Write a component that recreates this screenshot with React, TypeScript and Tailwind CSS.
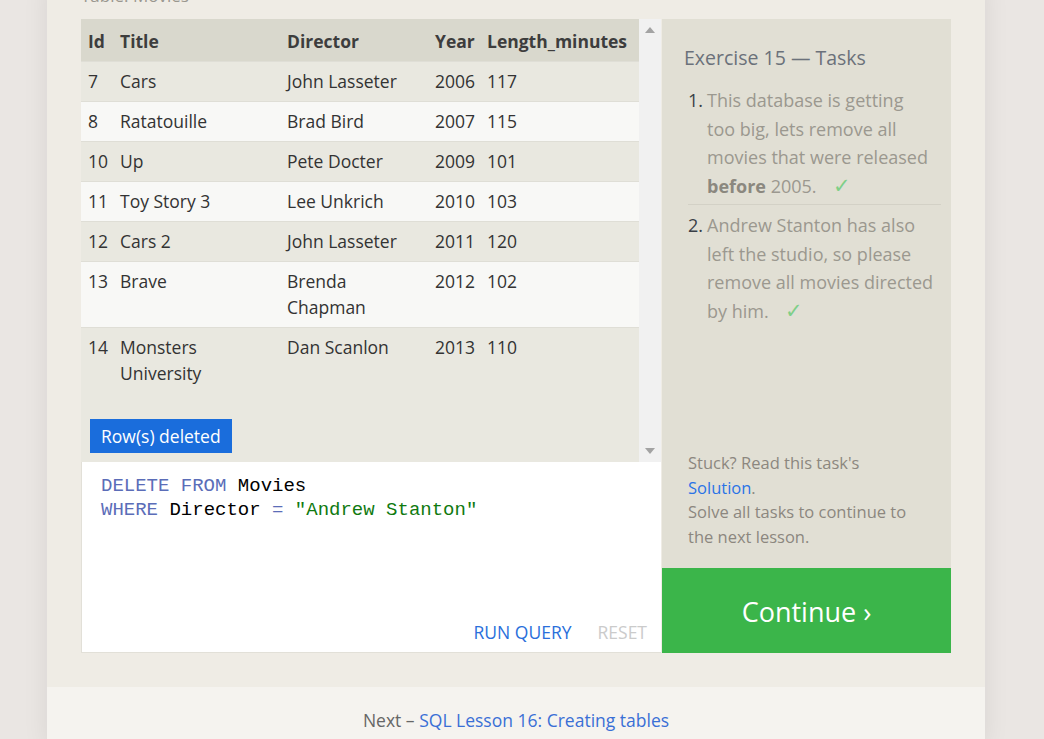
const rows = [
  { id: "7", title: "Cars", director: "John Lasseter", year: "2006", len: "117" },
  { id: "8", title: "Ratatouille", director: "Brad Bird", year: "2007", len: "115" },
  { id: "10", title: "Up", director: "Pete Docter", year: "2009", len: "101" },
  { id: "11", title: "Toy Story 3", director: "Lee Unkrich", year: "2010", len: "103" },
  { id: "12", title: "Cars 2", director: "John Lasseter", year: "2011", len: "120" },
  { id: "13", title: "Brave", director: "Brenda Chapman", year: "2012", len: "102" },
  { id: "14", title: "Monsters University", director: "Dan Scanlon", year: "2013", len: "110" },
];

function Check() {
  return <span className="ml-[16px] text-[21px] leading-none text-[#7fcf88]">✓</span>;
}

export default function App() {
  return (
    <div
      className="h-[739px] overflow-hidden bg-[#eae6e3] text-[#333]"
      style={{ fontFamily: '"Open Sans", "Noto Sans", sans-serif' }}
    >
      <div className="ml-[47px] w-[938px] shadow-[0_0_24px_rgba(0,0,0,0.08)]">
        {/* exercise */}
        <div className="bg-[#efece5] px-[34px] pb-[34px]">
          <div className="-mt-[16px] mb-[11px] text-[17px] leading-[24px] text-[#9a978f]">Table: Movies</div>

          <div className="flex gap-px">
            {/* left: results + editor */}
            <div className="flex w-[580px] flex-col">
              <div className="flex h-[443px] bg-[#e9e8e0]">
                <div className="w-[558px]">
                  <table className="w-full table-fixed border-collapse text-left text-[17.5px]">
                    <colgroup>
                      <col className="w-[32px]" />
                      <col className="w-[167px]" />
                      <col className="w-[148px]" />
                      <col className="w-[52px]" />
                      <col />
                    </colgroup>
                    <thead>
                      <tr className="h-[42px] bg-[#d9d8cd] text-[#3d3d3d]">
                        <th className="pl-[7px] pt-[2px] font-bold">Id</th>
                        <th className="pl-[7px] pt-[2px] font-bold">Title</th>
                        <th className="pl-[7px] pt-[2px] font-bold">Director</th>
                        <th className="pl-[7px] pt-[2px] font-bold">Year</th>
                        <th className="pl-[7px] pt-[2px] font-bold whitespace-nowrap">Length_minutes</th>
                      </tr>
                    </thead>
                    <tbody>
                      {rows.map((r, i) => (
                        <tr
                          key={r.id}
                          className={`border-t border-[#dfded6] align-top leading-[26px] ${
                            i % 2 === 1 ? "bg-[#f8f8f6]" : "bg-[#e9e8e0]"
                          }`}
                        >
                          <td className="pt-[6px] pb-[7px] pl-[7px]">{r.id}</td>
                          <td className="pt-[6px] pb-[7px] pl-[7px] pr-[20px]">{r.title}</td>
                          <td className="pt-[6px] pb-[7px] pl-[7px] pr-[20px]">{r.director}</td>
                          <td className="pt-[6px] pb-[7px] pl-[7px]">{r.year}</td>
                          <td className="pt-[6px] pb-[7px] pl-[7px]">{r.len}</td>
                        </tr>
                      ))}
                    </tbody>
                  </table>
                  <div className="mt-[26px] ml-[9px] inline-block bg-[#1a6ddc] px-[11px] text-[17.5px] leading-[34px] text-white">
                    Row(s) deleted
                  </div>
                </div>
                {/* scrollbar */}
                <div className="flex w-[22px] flex-col items-center justify-between bg-[#f1f1f1] py-[8px]">
                  <svg width="10" height="6" viewBox="0 0 10 6">
                    <path d="M0 6 L5 0 L10 6 Z" fill="#a3a3a3" />
                  </svg>
                  <svg width="10" height="6" viewBox="0 0 10 6">
                    <path d="M0 0 L5 6 L10 0 Z" fill="#a3a3a3" />
                  </svg>
                </div>
              </div>

              <div className="flex h-[191px] flex-col justify-between border-b border-l border-[#e2e0d8] bg-white">
                <pre
                  className="pt-[12px] pl-[19px] text-[19px] leading-[24px]"
                  style={{ fontFamily: '"Liberation Mono", "DejaVu Sans Mono", monospace' }}
                >
                  <span className="text-[#5b6db8]">DELETE FROM</span> <span className="text-black">Movies</span>
                  {"\n"}
                  <span className="text-[#5b6db8]">WHERE</span> <span className="text-black">Director</span>{" "}
                  <span className="text-[#5b6db8]">=</span> <span className="text-[#107a10]">"Andrew Stanton"</span>
                </pre>
                <div className="flex justify-end gap-[26px] pr-[14px] pb-[8px] text-[17.5px] leading-[24px]">
                  <span className="text-[#2a6fdb]">RUN QUERY</span>
                  <span className="text-[#cbcbcb]">RESET</span>
                </div>
              </div>
            </div>

            {/* right: tasks */}
            <div className="flex w-[290px] flex-col">
              <div className="flex h-[549px] flex-col justify-between bg-[#e1dfd4]">
                <div>
                  <h3 className="pt-[26px] pl-[22px] text-[19.5px] leading-[26px] text-[#6b717a]">
                    Exercise 15 — Tasks
                  </h3>
                  <ol className="mt-[15px] pr-[10px] pl-[26px] text-[18px] leading-[28.5px] text-[#9b988f]">
                    <li className="flex border-b border-[#d3d1c6] pb-[4px]">
                      <span className="w-[19px] shrink-0 text-[#3a3f47]">1.</span>
                      <span className="w-[227px]">
                        This database is getting too big, lets remove all movies that were released{" "}
                        <b className="text-[#8b887f]">before</b> 2005.
                        <Check />
                      </span>
                    </li>
                    <li className="flex pt-[6px]">
                      <span className="w-[19px] shrink-0 text-[#3a3f47]">2.</span>
                      <span className="w-[227px]">
                        Andrew Stanton has also left the studio, so please remove all movies directed by him.
                        <Check />
                      </span>
                    </li>
                  </ol>
                </div>
                <div className="w-[252px] pb-[19px] pl-[26px] text-[16.5px] leading-[24.5px] text-[#8c877f]">
                  Stuck? Read this task's
                  <br />
                  <span className="text-[#2a73e6]">Solution</span>.
                  <br />
                  Solve all tasks to continue to the next lesson.
                </div>
              </div>
              <div className="flex h-[85px] items-center justify-center bg-[#3bb54a] pt-[4px] text-[27px] text-white">
                Continue ›
              </div>
            </div>
          </div>
        </div>

        {/* footer */}
        <div className="h-[60px] bg-[#f5f3ef] pt-[20px] text-center text-[17.5px] leading-[26px] text-[#666]">
          Next – <span className="text-[#3a6fd6]">SQL Lesson 16: Creating tables</span>
        </div>
      </div>
    </div>
  );
}
